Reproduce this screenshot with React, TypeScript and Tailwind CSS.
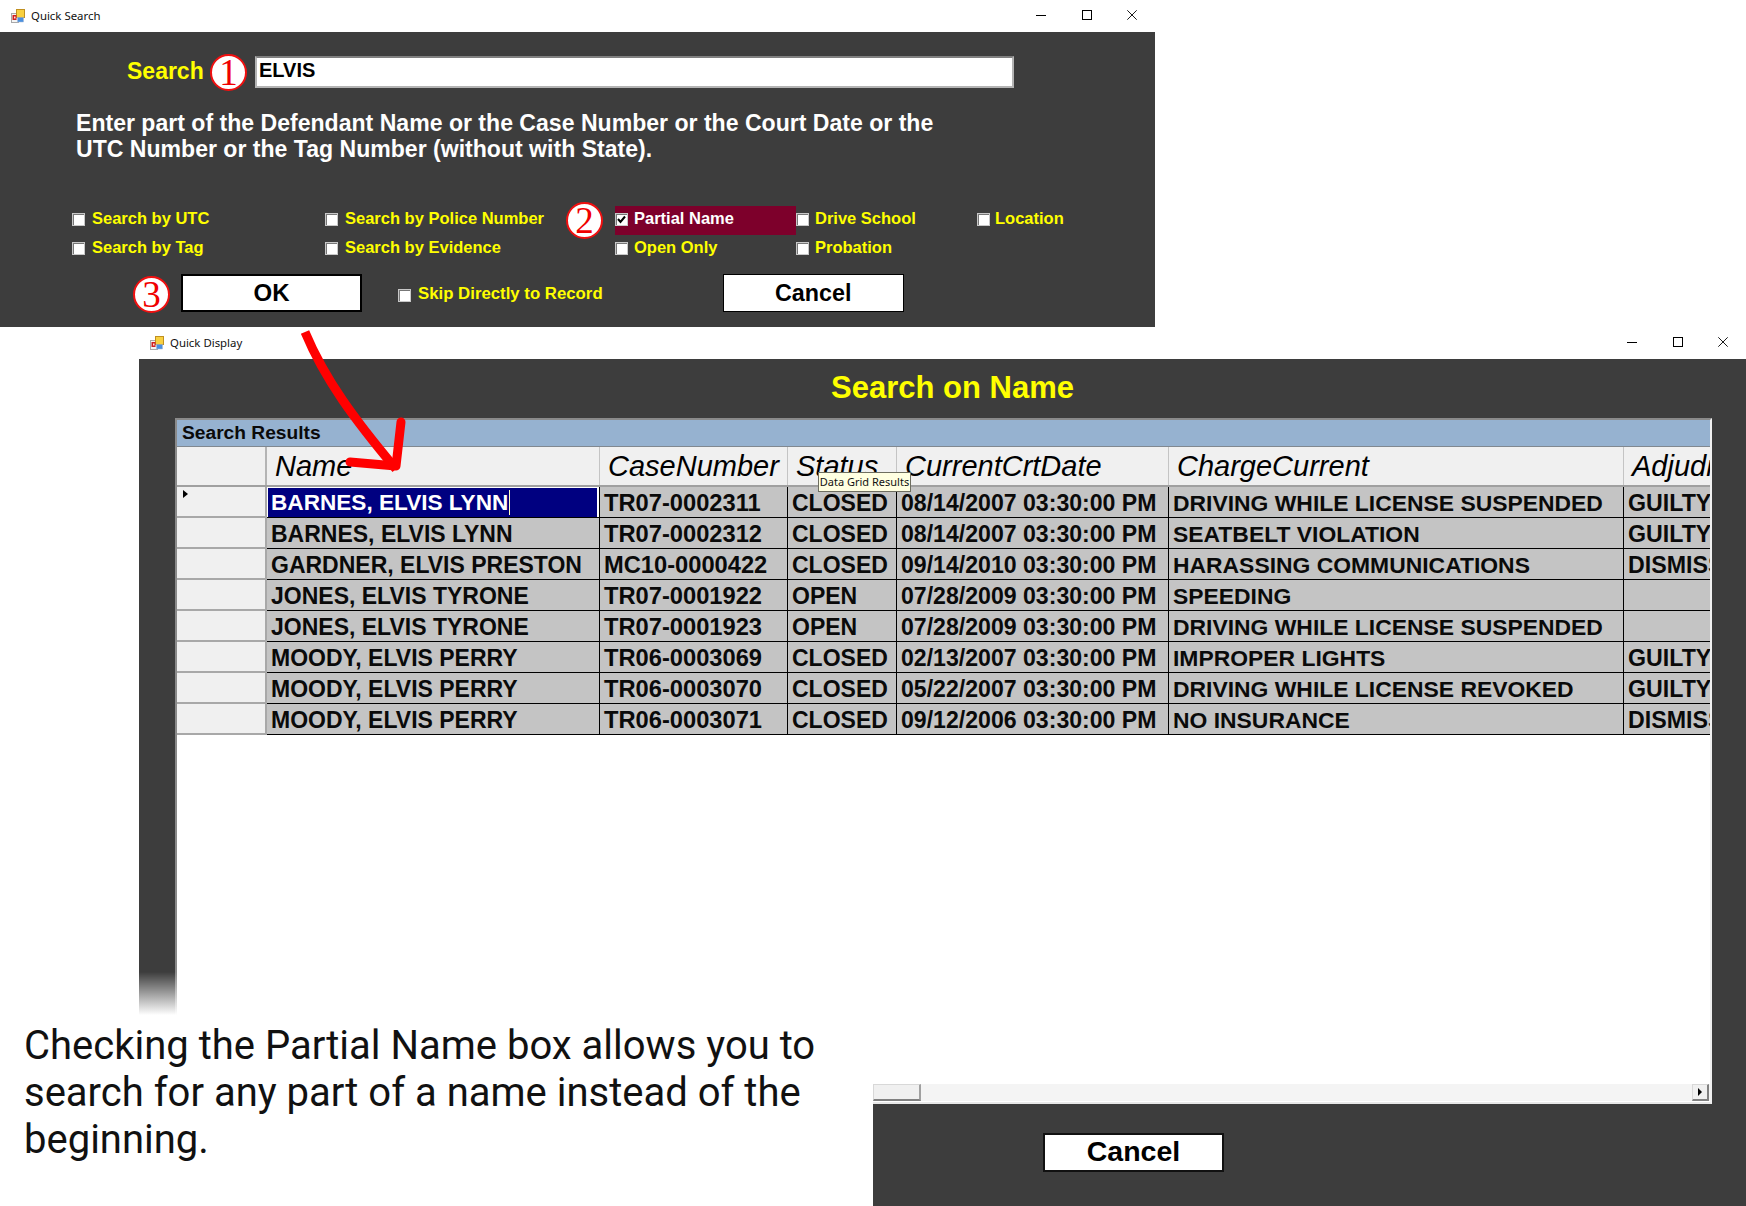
import React from "react";

const sans = "font-['Liberation_Sans',Arial,sans-serif]";

function AppIcon() {
  return (
    <svg width="14" height="14" viewBox="0 0 14 14" className="shrink-0">
      <rect x="0.5" y="4.5" width="7" height="9" fill="#f4f4f4" stroke="#a8a8a8" />
      <rect x="5.5" y="0.5" width="8" height="8" fill="#f8d040" stroke="#c09020" />
      <rect x="1.5" y="6" width="4" height="5" fill="#d02020" />
      <rect x="3" y="7.5" width="1.5" height="2" fill="#f8e0e0" />
      <rect x="6.5" y="8.5" width="6" height="4.5" fill="#4a90e0" stroke="#a8b8d0" strokeWidth="0.5" />
    </svg>
  );
}

function TitleBar({ title }: { title: string }) {
  return (
    <div className="flex items-center h-8 bg-white">
      <div className="ml-[11px] flex items-center gap-[6px]">
        <AppIcon />
        <span className="font-['Noto_Sans',sans-serif] text-[11.4px] text-[#111]">{title}</span>
      </div>
      <div className="ml-auto mr-[18px] -mt-[2px] flex items-center gap-[35.5px]">
        <svg width="10" height="10" viewBox="0 0 10 10"><path d="M0 5.5H10" stroke="#000" strokeWidth="1" /></svg>
        <svg width="10" height="10" viewBox="0 0 10 10"><rect x="0.5" y="0.5" width="9" height="9" fill="none" stroke="#000" /></svg>
        <svg width="10" height="10" viewBox="0 0 10 10"><path d="M0.3 0.3L9.7 9.7M9.7 0.3L0.3 9.7" stroke="#000" strokeWidth="0.9" /></svg>
      </div>
    </div>
  );
}

function Badge({ n, className }: { n: string; className: string }) {
  return (
    <div
      className={`w-[37px] h-[37px] rounded-full bg-white border-2 border-[#f01010] flex items-center justify-center font-['Liberation_Serif',serif] text-[37px] leading-none text-[#f00000] ${className}`}
    >
      {n}
    </div>
  );
}

function Check({ label, checked, className = "", gap = "ml-[7px]", size = "text-[16.5px]" }: { label: string; checked?: boolean; className?: string; gap?: string; size?: string }) {
  return (
    <div className={`flex items-center h-[29px] pb-[4px] ${className}`}>
      <div className="w-[13px] h-[13px] mt-[2px] bg-white border border-[#c8c8c8] shadow-[inset_1px_1px_0_#777] flex items-center justify-center shrink-0">
        {checked && (
          <svg width="9" height="9" viewBox="0 0 9 9"><path d="M1 4L3.5 7L8 1.5" fill="none" stroke="#000" strokeWidth="2" /></svg>
        )}
      </div>
      <span className={`${sans} font-bold ${size} leading-none ${gap} whitespace-nowrap ${checked ? "text-white" : "text-[#ffff00]"}`}>{label}</span>
    </div>
  );
}

const rows = [
  ["BARNES, ELVIS LYNN", "TR07-0002311", "CLOSED", "08/14/2007 03:30:00 PM", "DRIVING WHILE LICENSE SUSPENDED", "GUILTY"],
  ["BARNES, ELVIS LYNN", "TR07-0002312", "CLOSED", "08/14/2007 03:30:00 PM", "SEATBELT VIOLATION", "GUILTY"],
  ["GARDNER, ELVIS PRESTON", "MC10-0000422", "CLOSED", "09/14/2010 03:30:00 PM", "HARASSING COMMUNICATIONS", "DISMISSED"],
  ["JONES, ELVIS TYRONE", "TR07-0001922", "OPEN", "07/28/2009 03:30:00 PM", "SPEEDING", ""],
  ["JONES, ELVIS TYRONE", "TR07-0001923", "OPEN", "07/28/2009 03:30:00 PM", "DRIVING WHILE LICENSE SUSPENDED", ""],
  ["MOODY, ELVIS PERRY", "TR06-0003069", "CLOSED", "02/13/2007 03:30:00 PM", "IMPROPER LIGHTS", "GUILTY"],
  ["MOODY, ELVIS PERRY", "TR06-0003070", "CLOSED", "05/22/2007 03:30:00 PM", "DRIVING WHILE LICENSE REVOKED", "GUILTY"],
  ["MOODY, ELVIS PERRY", "TR06-0003071", "CLOSED", "09/12/2006 03:30:00 PM", "NO INSURANCE", "DISMISSED"],
];

const widths = ["w-[333px]", "w-[188px]", "w-[109px]", "w-[272px]", "w-[455px]", "w-[87px]"];
const sizes = ["text-[23px]", "text-[23.7px]", "text-[23px]", "text-[23.1px]", "text-[22.9px]", "text-[23.2px]"];
const headers = ["Name", "CaseNumber", "Status", "CurrentCrtDate", "ChargeCurrent", "Adjudication"];

function Grid() {
  return (
    <div className={`w-[1537px] h-[686px] ml-9 border-t-2 border-l-2 border-[#8a8a8a] border-r-2 border-r-[#f0f0f0] border-b-2 border-b-[#e8e8e8] bg-white flex flex-col overflow-hidden ${sans} relative`}>
      <div className="h-[27px] bg-[#96b2d0] border-b border-[#808890] flex items-center pl-[5px] text-[19.2px] font-bold text-[#0a0a0a] shrink-0">
        Search Results
      </div>
      <div className="flex h-[40px] bg-[#f0f0f0] border-b-2 border-[#a0a0a0] shrink-0">
        <div className="w-[90px] border-r-2 border-[#b4b4b4] shrink-0" />
        {headers.map((h, i) => (
          <div key={h} className={`${widths[i]} shrink-0 border-r border-[#c4c4c4] italic text-[29px] leading-[38px] text-black pl-2 overflow-hidden whitespace-nowrap`}>
            {h}
          </div>
        ))}
      </div>
      {rows.map((r, ri) => (
        <div key={ri} className="flex h-[31px] shrink-0">
          <div className="w-[90px] bg-[#f0f0f0] border-b-2 border-r-2 border-[#a8a8a8] shrink-0 relative">
            {ri === 0 && <div className="absolute left-[6px] top-[3px] w-0 h-0 border-y-[4px] border-y-transparent border-l-[5px] border-l-black" />}
          </div>
          {r.map((c, ci) => {
            const selected = ri === 0 && ci === 0;
            return (
              <div
                key={ci}
                className={`${widths[ci]} ${sizes[ci]} shrink-0 border-b border-r border-black overflow-hidden whitespace-nowrap leading-[33px] font-bold text-[#0a0a0a] ${selected ? "bg-white p-px" : "bg-[#c4c4c4] pl-1"}`}
              >
                {selected ? (
                  <div className="h-[29px] bg-[#000080] text-white pl-[3px] text-[22.6px] leading-[30px] mr-[1px]">
                    <span className="border-r border-[#ffffc0] pr-px">{c}</span>
                  </div>
                ) : (
                  c
                )}
              </div>
            );
          })}
        </div>
      ))}
      <div className="mt-auto h-[17px] bg-[#f4f4f4] flex justify-between pl-[696px] pr-[1px] mb-[1px]">
        <div className="w-[48px] h-full bg-[#f0f0f0] border border-[#d8d8d8] border-b-2 border-r-2 border-b-[#808080] border-r-[#a0a0a0]" />
        <div className="w-[17px] h-full bg-[#f0f0f0] border border-[#d8d8d8] border-b-2 border-r-2 border-b-[#808080] border-r-[#808080] flex items-center justify-center">
          <div className="w-0 h-0 border-y-[4px] border-y-transparent border-l-[4px] border-l-black" />
        </div>
      </div>
      <div className="absolute left-[641px] top-[52px] h-[20px] w-[93px] bg-[#ffffe1] border border-[#6e6e60] flex items-center justify-center font-['Noto_Sans',sans-serif] text-[11px] text-[#111] whitespace-nowrap">
        Data Grid Results
      </div>
    </div>
  );
}

export default function App() {
  return (
    <div className="relative w-[1746px] h-[1206px] bg-white overflow-hidden">
      {/* Quick Search window */}
      <div className="absolute left-0 top-0 w-[1155px] h-[327px] flex flex-col">
        <TitleBar title="Quick Search" />
        <div className={`flex-1 bg-[#3d3d3d] ${sans} relative`}>
          <div className="flex items-center ml-[127px] mt-[22px] h-[37px]">
            <span className="text-[23px] font-bold text-[#ffff00] w-[83px] leading-none -mt-[3px]">Search</span>
            <Badge n="1" className="" />
            <div className="ml-2 w-[759px] h-[32px] -mt-[1px] bg-white border-2 border-[#b4b4b4] border-t-[#808080] text-[20px] font-bold text-black leading-[25px] pl-[2px]">
              ELVIS
            </div>
          </div>
          <p className="ml-[76px] mt-[19px] text-[23.07px] leading-[26px] font-bold text-white whitespace-nowrap">
            Enter part of the Defendant Name or the Case Number or the Court Date or the
            <br />
            UTC Number or the Tag Number (without with State).
          </p>
          <div className="ml-[72px] mt-[44px] grid grid-cols-[253px_290px_181px_181px_200px] grid-rows-[29px_29px]">
            <Check label="Search by UTC" />
            <Check label="Search by Police Number" />
            <Check label="Partial Name" checked className="bg-[#7d002b]" gap="ml-[6px]" />
            <Check label="Drive School" gap="ml-[6px]" />
            <Check label="Location" gap="ml-[5px]" />
            <Check label="Search by Tag" />
            <Check label="Search by Evidence" />
            <Check label="Open Only" gap="ml-[6px]" />
            <Check label="Probation" gap="ml-[6px]" />
          </div>
          <Badge n="2" className="absolute left-[566px] top-[170px]" />
          <div className="flex items-start ml-[181px] mt-[10px]">
            <div className="w-[181px] h-[38px] bg-white border-2 border-black flex items-center justify-center text-[24px] font-bold text-black">OK</div>
            <Check label="Skip Directly to Record" className="ml-9 mt-[8px]" size="text-[16.8px]" />
            <div className="ml-[120px] w-[181px] h-[38px] bg-white border border-black flex items-center justify-center text-[23.3px] font-bold text-black">Cancel</div>
          </div>
          <Badge n="3" className="absolute left-[133px] top-[244px]" />
        </div>
      </div>

      {/* Quick Display window */}
      <div className="absolute left-[139px] top-[327px] w-[1607px] h-[879px] flex flex-col">
        <TitleBar title="Quick Display" />
        <div className={`flex-1 bg-[#3d3d3d] ${sans} flex flex-col`}>
          <div className="h-[59px] flex items-center justify-center text-[31px] font-bold text-[#ffff00] pl-[20px]">
            <span className="-mt-[1px]">Search on Name</span>
          </div>
          <Grid />
          <div className="ml-[904px] mt-[29px] w-[181px] h-[39px] bg-white border-2 border-[#111] flex items-center justify-center text-[28.5px] leading-[33px] font-bold text-black">
            <span className="-mt-[2px]">Cancel</span>
          </div>
        </div>
      </div>

      {/* Annotation */}
      <div className="absolute left-[139px] top-[972px] w-[38px] h-[43px] bg-gradient-to-b from-transparent to-white" />
      <div className="absolute left-0 top-[1015px] w-[873px] h-[191px] bg-white">
        <p className="ml-6 mt-[7px] font-['Roboto',sans-serif] text-[40px] leading-[47px] text-[#111] whitespace-nowrap">
          Checking the Partial Name box allows you to
          <br />
          search for any part of a name instead of the
          <br />
          beginning.
        </p>
      </div>
      <svg className="absolute left-[290px] top-[325px]" width="130" height="160" viewBox="0 0 130 160">
        <path d="M15 7C35 55 65 95 106 144" fill="none" stroke="#ff0000" strokeWidth="9" />
        <path d="M111 97L106 141L60 137" fill="none" stroke="#ff0000" strokeWidth="9" strokeLinecap="round" strokeLinejoin="round" />
      </svg>
    </div>
  );
}
